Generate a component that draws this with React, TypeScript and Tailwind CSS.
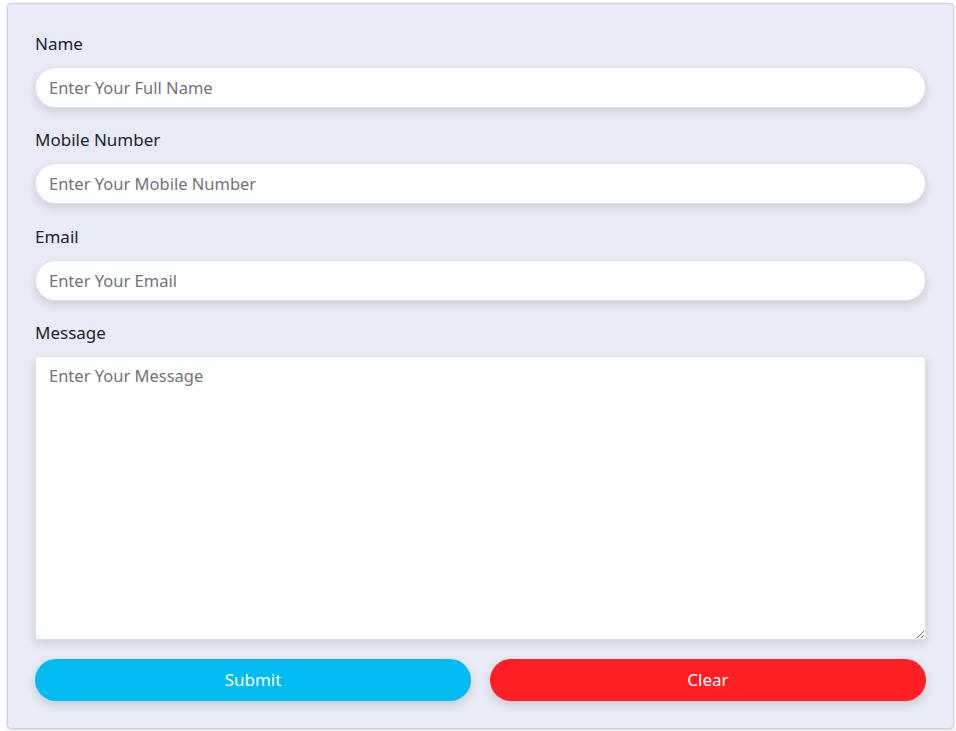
export default function App() {
  const font = { fontFamily: '"Segoe UI", "Noto Sans", "Open Sans", sans-serif' };
  const inputCls =
    "block w-full h-[41px] rounded-full bg-white border border-[#dcdfe6] px-[13px] text-[16.5px] text-[#333] placeholder:text-[#6f7378] shadow-[0_4px_10px_rgba(0,0,0,0.12)] outline-none";
  const labelCls = "block h-6 leading-6 text-[17px] text-[#212529] mb-[11px]";
  return (
    <div className="min-h-[731px] bg-white pt-[3px] pl-[7px] pr-[2px]" style={font}>
      <div className="w-[947px] h-[726px] bg-[#e8eaf6] border border-[#cfd1d8] rounded-[4px] shadow-[0_1px_4px_rgba(0,0,0,0.15)] pl-[27px] pr-[27px] pt-[28px]">
        <label className={labelCls}>Name</label>
        <input className={inputCls} placeholder="Enter Your Full Name" />
        <label className={labelCls + " mt-[20px]"}>Mobile Number</label>
        <input className={inputCls} placeholder="Enter Your Mobile Number" />
        <label className={labelCls + " mt-[21px]"}>Email</label>
        <input className={inputCls} placeholder="Enter Your Email" />
        <label className={labelCls + " mt-[20px]"}>Message</label>
        <textarea
          className="block w-full h-[284px] rounded-[3px] bg-white border border-[#dcdfe6] px-[13px] py-[7px] text-[16.5px] text-[#333] placeholder:text-[#6f7378] shadow-[0_4px_10px_rgba(0,0,0,0.12)] outline-none"
          placeholder="Enter Your Message"
        />
        <div className="mt-[19px] grid grid-cols-2 gap-[19px]">
          <button className="h-[42px] rounded-full bg-[#02bbf1] text-white text-[17px] shadow-[0_4px_10px_rgba(0,0,0,0.15)]">
            Submit
          </button>
          <button className="h-[42px] rounded-full bg-[#fc1f24] text-white text-[17px] shadow-[0_4px_10px_rgba(0,0,0,0.15)]">
            Clear
          </button>
        </div>
      </div>
    </div>
  );
}
